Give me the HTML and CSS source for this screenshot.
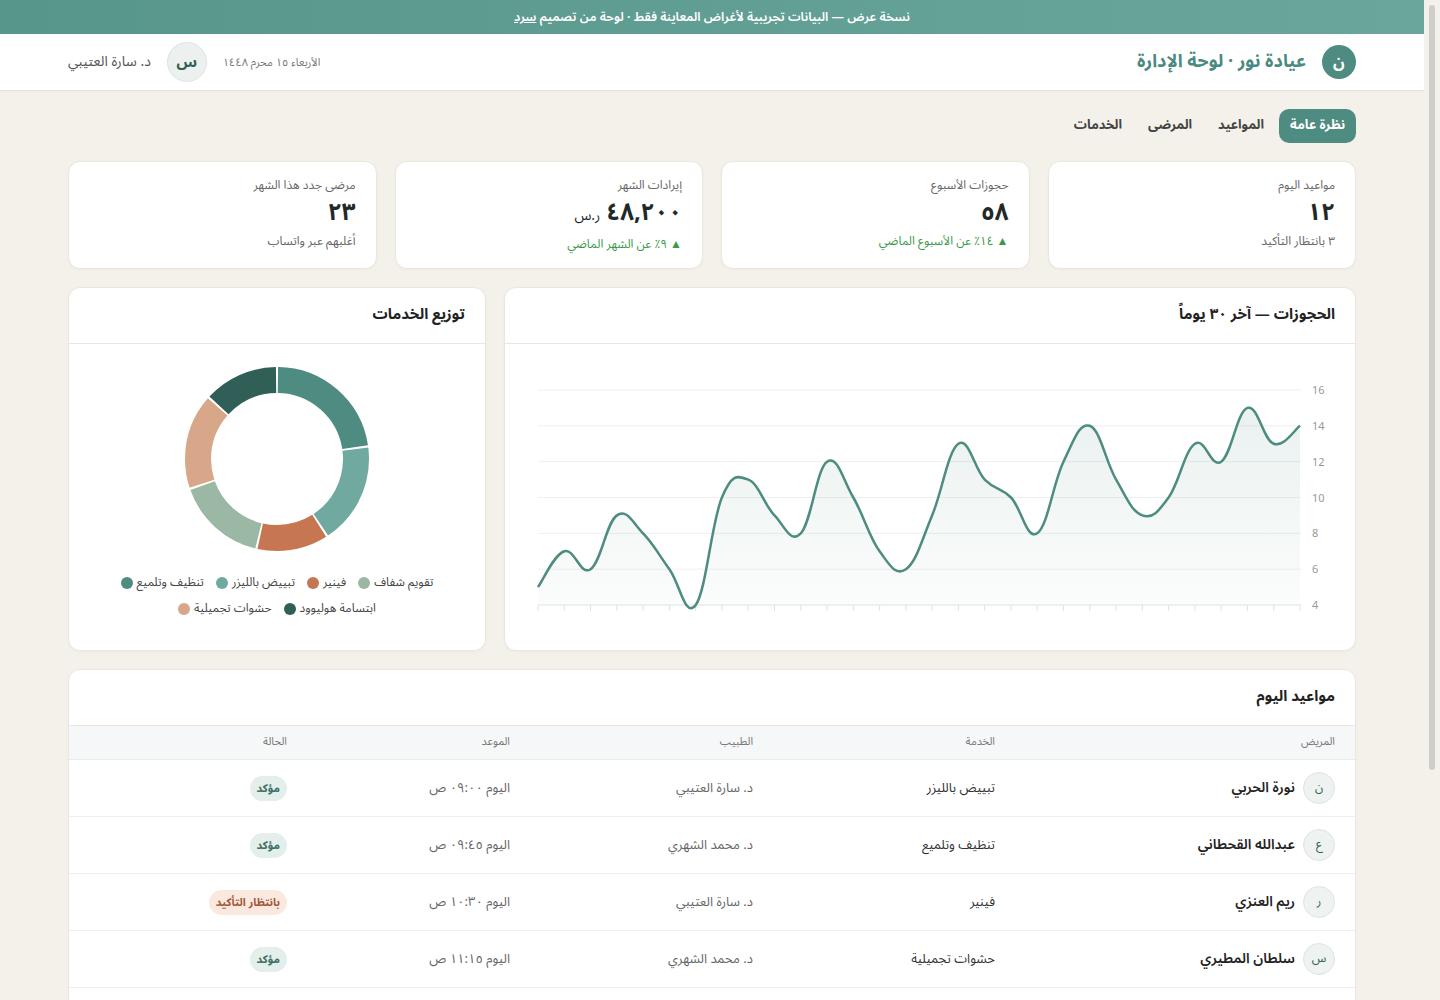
FILE: index.html
```html
<!DOCTYPE html>
<html lang="ar" dir="rtl">
<head>
    <meta charset="UTF-8">
    <meta name="viewport" content="width=device-width, initial-scale=1.0">
    <title>عيادة نور · لوحة الإدارة</title>
    <link rel="stylesheet" href="styles.css">
</head>
<body>
<div class="scroll-rail"><div class="scroll-thumb"></div></div>
<div class="page">
    <div class="demo-bar">نسخة عرض — البيانات تجريبية لأغراض المعاينة فقط · لوحة من تصميم <a href="#">سرد</a></div>

    <header class="topbar">
        <div class="topbar-inner">
            <div class="brand">
                <div class="brand-logo">ن</div>
                <div class="brand-name">عيادة نور · لوحة الإدارة</div>
            </div>
            <div class="user">
                <span class="today">الأربعاء ١٥ محرم ١٤٤٨</span>
                <div class="user-avatar">س</div>
                <span class="user-name">د. سارة العتيبي</span>
            </div>
        </div>
    </header>

    <main class="container">
        <nav class="tabs">
            <a href="#" class="tab active">نظرة عامة</a>
            <a href="#" class="tab">المواعيد</a>
            <a href="#" class="tab">المرضى</a>
            <a href="#" class="tab">الخدمات</a>
        </nav>

        <section class="stats">
            <div class="card stat">
                <div class="stat-label">مواعيد اليوم</div>
                <div class="stat-value">١٢</div>
                <div class="stat-sub">٣ بانتظار التأكيد</div>
            </div>
            <div class="card stat">
                <div class="stat-label">حجوزات الأسبوع</div>
                <div class="stat-value">٥٨</div>
                <div class="stat-sub up">▲ ١٤٪ عن الأسبوع الماضي</div>
            </div>
            <div class="card stat">
                <div class="stat-label">إيرادات الشهر</div>
                <div class="stat-value">٤٨,٢٠٠ <small>ر.س</small></div>
                <div class="stat-sub up">▲ ٩٪ عن الشهر الماضي</div>
            </div>
            <div class="card stat">
                <div class="stat-label">مرضى جدد هذا الشهر</div>
                <div class="stat-value">٢٣</div>
                <div class="stat-sub">أغلبهم عبر واتساب</div>
            </div>
        </section>

        <section class="charts">
            <div class="card">
                <div class="card-head">الحجوزات — آخر ٣٠ يوماً</div>
                <div class="line-body">
                    <svg id="line-chart" class="line-chart" viewBox="0 0 850 306" width="850" height="306">
                        <defs>
                            <linearGradient id="area-fill" x1="0" y1="0" x2="0" y2="1">
                                <stop offset="0%" stop-color="#4e8b80" stop-opacity="0.12"/>
                                <stop offset="100%" stop-color="#4e8b80" stop-opacity="0.02"/>
                            </linearGradient>
                        </defs>
                    </svg>
                </div>
            </div>
            <div class="card">
                <div class="card-head">توزيع الخدمات</div>
                <div class="donut-body">
                    <svg class="donut" viewBox="0 0 184 184" width="184" height="184">
                        <g transform="rotate(-90 92 92)" fill="none" stroke-width="26">
                            <circle cx="92" cy="92" r="79" pathLength="360" stroke="#4e8b80" stroke-dasharray="80.6 400" stroke-dashoffset="-0.7"/>
                            <circle cx="92" cy="92" r="79" pathLength="360" stroke="#6fa9a0" stroke-dasharray="63.6 400" stroke-dashoffset="-82.7"/>
                            <circle cx="92" cy="92" r="79" pathLength="360" stroke="#c67752" stroke-dasharray="44.6 400" stroke-dashoffset="-147.7"/>
                            <circle cx="92" cy="92" r="79" pathLength="360" stroke="#9bb8a5" stroke-dasharray="56.6 400" stroke-dashoffset="-193.7"/>
                            <circle cx="92" cy="92" r="79" pathLength="360" stroke="#d8a688" stroke-dasharray="59.6 400" stroke-dashoffset="-251.7"/>
                            <circle cx="92" cy="92" r="79" pathLength="360" stroke="#2f5f57" stroke-dasharray="46.6 400" stroke-dashoffset="-312.7"/>
                        </g>
                    </svg>
                    <div class="legend">
                        <div class="legend-row">
                            <span class="legend-item">تقويم شفاف<i style="background:#9bb8a5"></i></span>
                            <span class="legend-item">فينير<i style="background:#c67752"></i></span>
                            <span class="legend-item">تبييض بالليزر<i style="background:#6fa9a0"></i></span>
                            <span class="legend-item">تنظيف وتلميع<i style="background:#4e8b80"></i></span>
                        </div>
                        <div class="legend-row">
                            <span class="legend-item">ابتسامة هوليوود<i style="background:#2f5f57"></i></span>
                            <span class="legend-item">حشوات تجميلية<i style="background:#d8a688"></i></span>
                        </div>
                    </div>
                </div>
            </div>
        </section>

        <section class="card table-card">
            <div class="card-head">مواعيد اليوم</div>
            <table class="appointments">
                <colgroup>
                    <col style="width:340px">
                    <col style="width:242px">
                    <col style="width:243px">
                    <col style="width:223px">
                    <col>
                </colgroup>
                <thead>
                    <tr>
                        <th>المريض</th>
                        <th>الخدمة</th>
                        <th>الطبيب</th>
                        <th>الموعد</th>
                        <th>الحالة</th>
                    </tr>
                </thead>
                <tbody>
                    <tr>
                        <td><div class="patient"><span class="initial">ن</span>نورة الحربي</div></td>
                        <td class="service">تبييض بالليزر</td>
                        <td class="muted">د. سارة العتيبي</td>
                        <td class="muted">اليوم ٠٩:٠٠ ص</td>
                        <td><span class="pill ok">مؤكد</span></td>
                    </tr>
                    <tr>
                        <td><div class="patient"><span class="initial">ع</span>عبدالله القحطاني</div></td>
                        <td class="service">تنظيف وتلميع</td>
                        <td class="muted">د. محمد الشهري</td>
                        <td class="muted">اليوم ٠٩:٤٥ ص</td>
                        <td><span class="pill ok">مؤكد</span></td>
                    </tr>
                    <tr>
                        <td><div class="patient"><span class="initial">ر</span>ريم العنزي</div></td>
                        <td class="service">فينير</td>
                        <td class="muted">د. سارة العتيبي</td>
                        <td class="muted">اليوم ١٠:٣٠ ص</td>
                        <td><span class="pill wait">بانتظار التأكيد</span></td>
                    </tr>
                    <tr>
                        <td><div class="patient"><span class="initial">س</span>سلطان المطيري</div></td>
                        <td class="service">حشوات تجميلية</td>
                        <td class="muted">د. محمد الشهري</td>
                        <td class="muted">اليوم ١١:١٥ ص</td>
                        <td><span class="pill ok">مؤكد</span></td>
                    </tr>
                    <tr>
                        <td><div class="patient"><span class="initial">ل</span>لمى الدوسري</div></td>
                        <td class="service">تقويم شفاف</td>
                        <td class="muted">د. سارة العتيبي</td>
                        <td class="muted">اليوم ١٢:٠٠ م</td>
                        <td><span class="pill ok">مؤكد</span></td>
                    </tr>
                    <tr>
                        <td><div class="patient"><span class="initial">ف</span>فهد الزهراني</div></td>
                        <td class="service">ابتسامة هوليوود</td>
                        <td class="muted">د. محمد الشهري</td>
                        <td class="muted">اليوم ٠١:٣٠ م</td>
                        <td><span class="pill wait">بانتظار التأكيد</span></td>
                    </tr>
                </tbody>
            </table>
        </section>
    </main>
</div>

    <script>
        // bookings over the last 30 days
        (function () {
            const bookings = [5, 7, 6, 9, 8, 6, 4, 10, 11, 9, 8, 12, 10, 7, 6, 9, 13, 11, 10, 8, 12, 14, 11, 9, 10, 13, 12, 15, 13, 14];

            const svg = document.getElementById('line-chart');
            const ns = 'http://www.w3.org/2000/svg';
            const plotLeft = 33, plotRight = 795, plotTop = 46, plotBottom = 261, vMin = 4, vMax = 16;

            function add(tag, attrs, text) {
                const el = document.createElementNS(ns, tag);
                for (const k in attrs) el.setAttribute(k, attrs[k]);
                if (text) el.textContent = text;
                svg.appendChild(el);
                return el;
            }

            const yOf = v => plotBottom - (v - vMin) * (plotBottom - plotTop) / (vMax - vMin);

            for (let v = vMin; v <= vMax; v += 2) {
                const y = yOf(v);
                add('line', { x1: plotLeft, x2: plotRight + 1, y1: y, y2: y, stroke: v === vMin ? '#e2e2e2' : '#efefef', 'stroke-width': 1 });
                add('text', { x: 807, y: y + 4, class: 'axis-label' }, String(v));
            }

            const step = (plotRight - plotLeft) / (bookings.length - 1);
            const pts = bookings.map((v, i) => [plotLeft + i * step, yOf(v)]);

            for (let i = 0; i < pts.length; i++) {
                add('line', { x1: pts[i][0], x2: pts[i][0], y1: plotBottom, y2: plotBottom + 6, stroke: '#e2e2e2', 'stroke-width': 1 });
            }

            const f = n => n.toFixed(1);
            let d = 'M' + f(pts[0][0]) + ',' + f(pts[0][1]);
            for (let i = 0; i < pts.length - 1; i++) {
                const p0 = pts[i - 1] || pts[i], p1 = pts[i], p2 = pts[i + 1], p3 = pts[i + 2] || pts[i + 1];
                const t = 0.2;
                const c1 = [p1[0] + (p2[0] - p0[0]) * t, p1[1] + (p2[1] - p0[1]) * t];
                const c2 = [p2[0] - (p3[0] - p1[0]) * t, p2[1] - (p3[1] - p1[1]) * t];
                d += ' C' + f(c1[0]) + ',' + f(c1[1]) + ' ' + f(c2[0]) + ',' + f(c2[1]) + ' ' + f(p2[0]) + ',' + f(p2[1]);
            }

            add('path', { d: d + ' L' + plotRight + ',' + plotBottom + ' L' + plotLeft + ',' + plotBottom + ' Z', fill: 'url(#area-fill)' });
            add('path', { d: d, fill: 'none', stroke: '#4e8b80', 'stroke-width': 2.5, 'stroke-linejoin': 'round' });
        })();
    </script>
</body>
</html>
```

FILE: styles.css
```css
* {
    box-sizing: border-box;
}

html, body {
    height: 100%;
    background-color: #f4f1eb;
}

body {
    margin: 0;
    padding: 0;
    display: flex;
    font-family: "Noto Sans Arabic", "Noto Sans", sans-serif;
    font-size: 14px;
    color: #222;
    overflow: hidden;
}

/* thin page scrollbar, drawn as its own column */
.scroll-rail {
    flex: 0 0 16px;
    height: 100%;
    padding: 5px;
    background-color: #f4f1eb;
}

.scroll-thumb {
    height: 765px;
    border-radius: 4px;
    background-color: #cfcdc8;
}

.page {
    flex: 1;
    height: 100%;
    overflow: hidden;
}

a {
    color: inherit;
    text-decoration: none;
}

/* demo notice */
.demo-bar {
    height: 34px;
    line-height: 34px;
    text-align: center;
    color: #fff;
    font-size: 12.5px;
    font-weight: 600;
    background: linear-gradient(90deg, #57968b, #6aa69c);
}

.demo-bar a {
    text-decoration: underline;
}

/* top bar */
.topbar {
    background-color: #fff;
    border-bottom: 1px solid #e6e2da;
    box-shadow: 0 1px 2px rgba(0, 0, 0, 0.03);
}

.topbar-inner {
    max-width: 1288px;
    margin: 0 auto;
    height: 56px;
    display: flex;
    align-items: center;
    justify-content: space-between;
}

.brand, .user {
    display: flex;
    align-items: center;
    gap: 16px;
}

.brand-logo {
    width: 34px;
    height: 34px;
    border-radius: 50%;
    background-color: #4e8b80;
    color: #fff;
    font-weight: bold;
    font-size: 16px;
    display: flex;
    align-items: center;
    justify-content: center;
}

.brand-name {
    color: #4a8a80;
    font-size: 18px;
    font-weight: bold;
    padding-bottom: 3px;
}

.today {
    font-size: 11px;
    color: #777;
}

.user-avatar {
    width: 40px;
    height: 40px;
    border-radius: 50%;
    background-color: #ecf1ef;
    border: 1px solid #dde4e2;
    color: #2f5f57;
    font-weight: bold;
    font-size: 15px;
    display: flex;
    align-items: center;
    justify-content: center;
}

.user-name {
    font-size: 14px;
    color: #555;
    padding-bottom: 2px;
}

/* page */
.container {
    max-width: 1288px;
    margin: 0 auto;
    padding: 18px 0 80px;
}

.tabs {
    display: flex;
    gap: 4px;
    margin-bottom: 18px;
}

.tab {
    height: 34px;
    line-height: 32px;
    padding: 0 11px;
    border-radius: 10px;
    font-size: 13px;
    font-weight: bold;
    color: #444;
}

.tab.active {
    background-color: #4e8b80;
    color: #fff;
}

.card {
    background-color: #fff;
    border: 1px solid #ebe7df;
    border-radius: 12px;
    box-shadow: 0 1px 3px rgba(0, 0, 0, 0.03);
}

/* stat cards */
.stats {
    display: grid;
    grid-template-columns: repeat(4, 1fr);
    gap: 18px;
    margin-bottom: 18px;
}

.stat {
    height: 108px;
    padding: 14px 20px 0;
}

.stat-label {
    font-size: 12px;
    color: #666;
    line-height: 20px;
}

.stat-value {
    font-size: 24px;
    font-weight: bold;
    color: #1f2a28;
    line-height: 34px;
}

.stat-value small {
    font-size: 14px;
    font-weight: normal;
}

.stat-sub {
    font-size: 12px;
    color: #666;
    line-height: 20px;
    margin-top: 2px;
}

.stat-sub.up {
    color: #3a9a4a;
}

/* charts */
.charts {
    display: grid;
    grid-template-columns: 1fr 418px;
    gap: 18px;
    margin-bottom: 18px;
}

.card-head {
    height: 56px;
    display: flex;
    align-items: center;
    padding: 0 20px 4px;
    font-size: 15px;
    font-weight: bold;
    color: #222;
    border-bottom: 1px solid #ebe7df;
}

.line-body {
    height: 306px;
}

.line-chart {
    display: block;
    width: 100%;
    height: 306px;
    direction: ltr;
}

.axis-label {
    font-family: "Noto Sans", sans-serif;
    font-size: 11px;
    fill: #999;
}

.donut-body {
    height: 306px;
    padding-top: 23px;
    display: flex;
    flex-direction: column;
    align-items: center;
}

.donut {
    display: block;
}

.legend {
    margin-top: 19px;
}

.legend-row {
    display: flex;
    justify-content: center;
    gap: 12px;
}

.legend-item {
    display: flex;
    align-items: center;
    gap: 4px;
    font-size: 12px;
    color: #444;
    line-height: 26px;
}

.legend-item i {
    width: 12px;
    height: 12px;
    border-radius: 50%;
}

/* appointments table */
.appointments {
    width: 100%;
    border-collapse: collapse;
    table-layout: fixed;
}

.appointments th {
    height: 33px;
    padding: 0 20px 2px;
    text-align: right;
    font-size: 11px;
    font-weight: normal;
    color: #777;
    background-color: #f5f7f8;
    border-bottom: 1px solid #e9ecec;
}

.appointments td {
    height: 57px;
    padding: 0 20px;
    border-bottom: 1px solid #eeeeee;
    font-size: 13px;
}

.appointments tr:last-child td {
    border-bottom: none;
}

.patient {
    display: flex;
    align-items: center;
    gap: 8px;
    font-size: 14px;
    font-weight: 600;
    color: #222;
}

.initial {
    width: 32px;
    height: 32px;
    border-radius: 50%;
    background-color: #eef2f1;
    border: 1px solid #dfe5e3;
    color: #2f5f57;
    font-size: 12px;
    font-weight: normal;
    display: flex;
    align-items: center;
    justify-content: center;
}

.service {
    color: #333;
}

.muted {
    color: #666;
}

.pill {
    display: inline-block;
    padding: 1px 7px;
    border-radius: 999px;
    font-size: 11px;
    font-weight: bold;
}

.pill.ok {
    background-color: #e4eeeb;
    color: #3d6f67;
}

.pill.wait {
    background-color: #fbe8df;
    color: #a0583a;
}
```
